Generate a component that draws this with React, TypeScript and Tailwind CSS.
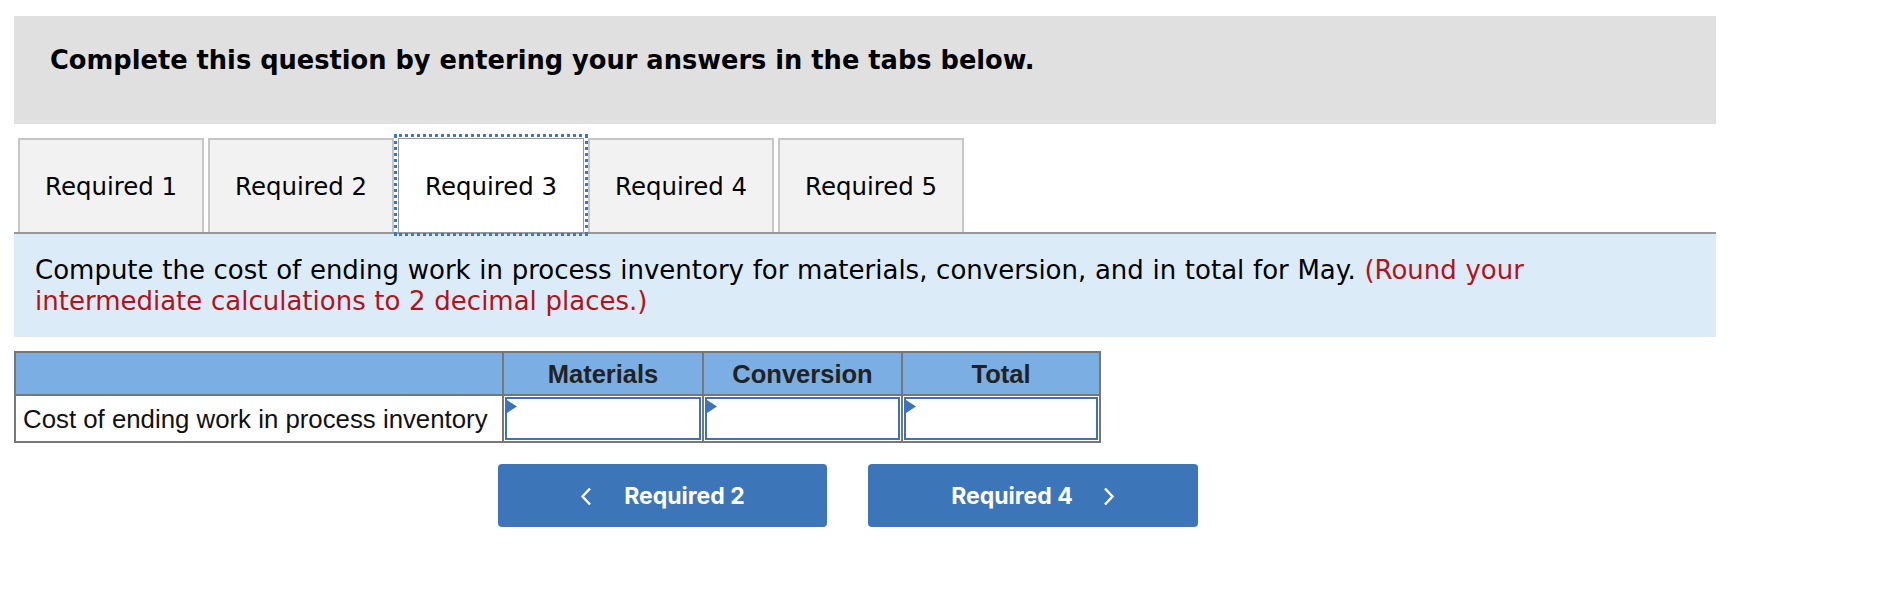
import React from "react";

const tabs = ["Required 1", "Required 2", "Required 3", "Required 4", "Required 5"];

function Flag() {
  return (
    <svg className="absolute left-0 top-[1px]" width="10" height="13" viewBox="0 0 10 13">
      <polygon points="0,0 10,6.5 0,13" fill="#3b74ba" />
    </svg>
  );
}

function InputCell() {
  return (
    <div className="border-l-2 border-[#777] bg-white p-px">
      <div className="relative h-full w-full border-2 border-[#3b72b8] bg-white">
        <Flag />
      </div>
    </div>
  );
}

export default function App() {
  return (
    <div className="min-h-[594px] w-[1882px] bg-white pl-[14px] pt-[16px] font-['DejaVu_Sans',sans-serif] text-black">
      <div className="w-[1702px]">
        <div className="h-[108px] bg-[#e0e0e0] pl-[36px] pt-[28px]">
          <div className="text-[25.7px] font-bold leading-[32px]">
            Complete this question by entering your answers in the tabs below.
          </div>
        </div>

        <div className="mt-[14px] flex h-[96px] gap-[4px] border-b-2 border-[#999] pl-[4px]">
          {tabs.map((t, i) =>
            i === 2 ? (
              <div
                key={t}
                className="flex h-[94px] w-[186px] items-center justify-center border border-b-0 border-[#999] bg-white pt-[3px] text-[24.4px] outline-[3px] outline-dotted outline-[#3c78c0] outline-offset-[1px]"
              >
                {t}
              </div>
            ) : (
              <div
                key={t}
                className="flex h-[94px] w-[186px] items-center justify-center border-2 border-b-0 border-[#c6c6c6] bg-[#f2f2f2] pt-[3px] text-[24.4px]"
              >
                {t}
              </div>
            )
          )}
        </div>

        <div className="h-[103px] bg-[#dcebf8] pl-[21px] pt-[21px] text-[26px] leading-[31px] [word-spacing:0.4px]">
          Compute the cost of ending work in process inventory for materials, conversion, and in total for May.{" "}
          <span className="text-[#b3121c]">
            (Round your
            <br />
            intermediate calculations to 2 decimal places.)
          </span>
        </div>

        <div className="mt-[14px] w-[1087px] border-2 border-[#777] font-['Liberation_Sans',Arial,sans-serif]">
          <div className="grid h-[43px] grid-cols-[486px_200px_199px_198px] border-b-2 border-[#777] bg-[#7baee2] text-[25.5px] font-bold text-[#222]">
            <div />
            <div className="flex items-center justify-center border-l-2 border-[#777] pt-[1px]">Materials</div>
            <div className="flex items-center justify-center border-l-2 border-[#777] pt-[1px]">Conversion</div>
            <div className="flex items-center justify-center border-l-2 border-[#777] pt-[1px]">Total</div>
          </div>
          <div className="grid h-[45px] grid-cols-[486px_200px_199px_198px] bg-white text-[25.8px] text-[#111]">
            <div className="flex items-center pl-[7px] pt-[2px]">Cost of ending work in process inventory</div>
            <InputCell />
            <InputCell />
            <InputCell />
          </div>
        </div>

        <div className="ml-[484px] mt-[21px] flex gap-[41px] font-['Inter',sans-serif]">
          <button className="flex h-[63px] w-[329px] items-center justify-center rounded-[4px] bg-[#3d76b8] pt-[1px] text-[23px] font-bold text-white">
            <svg width="12" height="19" viewBox="0 0 12 19" className="mr-[32px]">
              <polyline points="10,1.5 2.5,9.5 10,17.5" fill="none" stroke="white" strokeWidth="2.4" />
            </svg>
            <span>Required 2</span>
          </button>
          <button className="flex h-[63px] w-[330px] items-center justify-center rounded-[4px] bg-[#3d76b8] pt-[1px] text-[23px] font-bold text-white">
            <span>Required 4</span>
            <svg width="12" height="19" viewBox="0 0 12 19" className="ml-[30px]">
              <polyline points="2,1.5 9.5,9.5 2,17.5" fill="none" stroke="white" strokeWidth="2.4" />
            </svg>
          </button>
        </div>
      </div>
    </div>
  );
}
